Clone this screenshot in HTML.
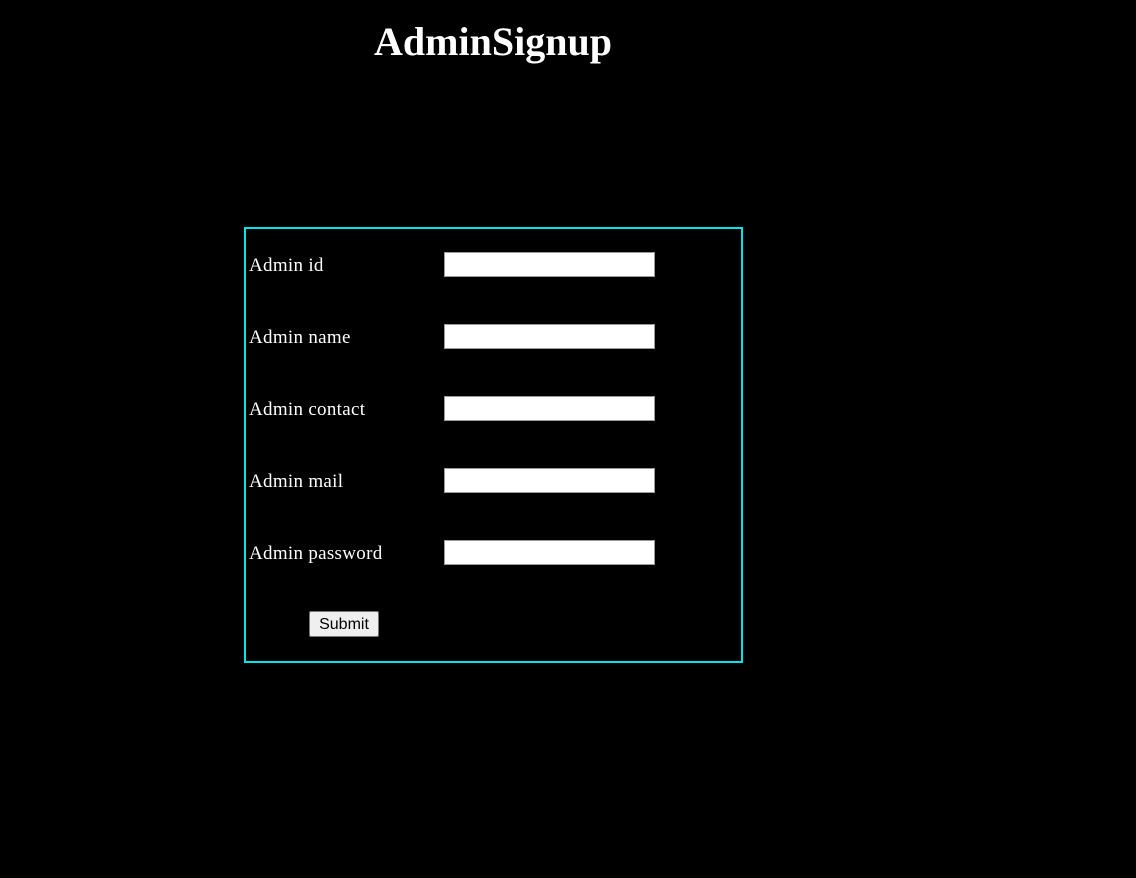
<!DOCTYPE html>
<html><head><style>
body{margin:0;background:#000;width:1136px;height:878px;position:relative;overflow:hidden;font-family:"Liberation Serif",serif;color:#fff}
h1{position:absolute;left:0;width:986px;top:20px;margin:0;text-align:center;font-size:40px;font-weight:bold;line-height:44px}
.box{position:absolute;left:244px;top:227px;width:495px;height:432px;border:2px solid #00e5e5}
.lbl{position:absolute;left:249px;font-size:19px;line-height:22px;letter-spacing:0.3px}
.inp{position:absolute;left:444px;width:211px;height:25px;background:#fff;border:1px solid #999;box-sizing:border-box}
.btn{position:absolute;left:309px;top:611px;width:70px;height:26px;box-sizing:border-box;background:#efefef;border:1px solid #767676;border-radius:2px;font-family:"Liberation Sans",sans-serif;font-size:16px;color:#000;text-align:center;line-height:25px}
</style></head><body>
<h1>AdminSignup</h1>
<div class="box"></div>
<div class="lbl" style="top:255px">Admin id</div><div class="inp" style="top:252px"></div>
<div class="lbl" style="top:327px">Admin name</div><div class="inp" style="top:324px"></div>
<div class="lbl" style="top:399px">Admin contact</div><div class="inp" style="top:396px"></div>
<div class="lbl" style="top:471px">Admin mail</div><div class="inp" style="top:468px"></div>
<div class="lbl" style="top:543px">Admin password</div><div class="inp" style="top:540px"></div>
<div class="btn">Submit</div>
</body></html>
